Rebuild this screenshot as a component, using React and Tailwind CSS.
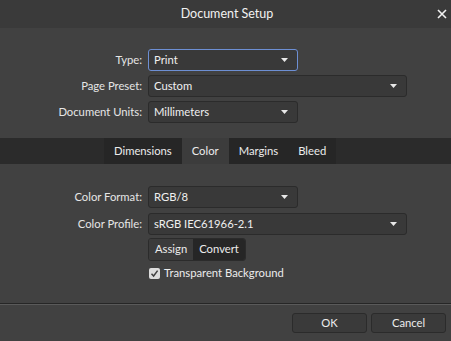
import React from "react";

function Select({ value, width, focused }) {
    return (
        <div
            className={`flex items-center justify-between h-[22px] ${width} rounded-[3px] border bg-[#393939] pl-[5px] pr-[9px] ${focused ? "border-[#6d8fd4]" : "border-[#2b2b2b]"}`}
        >
            <span className="text-[11.25px] text-[#f0f0f0] leading-none">{value}</span>
            <svg width="7" height="4" viewBox="0 0 7 4">
                <path d="M0 0H7L3.5 4Z" fill="#e8e8e8" />
            </svg>
        </div>
    );
}

function Row({ label, children }) {
    return (
        <div className="flex items-center">
            <div className="w-[148px] pr-[6px] text-right text-[11.25px] text-[#e6e6e6]">{label}</div>
            {children}
        </div>
    );
}

export default function App() {
    const tabs = ["Dimensions", "Color", "Margins", "Bleed"];
    return (
        <div
            className="w-[451px] h-[341px] bg-[#414141] flex flex-col select-none"
            style={{ fontFamily: 'Lato, "Open Sans", sans-serif' }}
        >
            {/* title bar */}
            <div className="relative h-[28px] bg-[#3a3a3a] flex items-center justify-center">
                <span className="text-[12.5px] text-[#f2f2f2] pl-[3px]">Document Setup</span>
                <svg className="absolute right-[4px] top-[9px]" width="10" height="10" viewBox="0 0 10 10">
                    <path d="M1 1L9 9M9 1L1 9" stroke="#f2f2f2" strokeWidth="1.6" />
                </svg>
            </div>

            <div className="flex flex-col gap-[4px] pt-[21px]">
                <Row label="Type:">
                    <Select value="Print" width="w-[150px]" focused />
                </Row>
                <Row label="Page Preset:">
                    <Select value="Custom" width="w-[259px]" />
                </Row>
                <Row label="Document Units:">
                    <Select value="Millimeters" width="w-[150px]" />
                </Row>
            </div>

            {/* tabs */}
            <div className="mt-[15px] h-[26px] bg-[#2b2b2b] flex pl-[104px]">
                <div className="flex bg-[#262626]">
                    {tabs.map((t) => (
                        <div
                            key={t}
                            className={`h-full flex items-center text-[11.25px] text-[#ececec] px-[10px] ${t === "Color" ? "bg-[#3c3c3c]" : ""}`}
                        >
                            {t}
                        </div>
                    ))}
                </div>
            </div>

            <div className="flex flex-col pt-[22px]">
                <Row label="Color Format:">
                    <Select value="RGB/8" width="w-[150px]" />
                </Row>
                <div className="mt-[5px]">
                    <Row label="Color Profile:">
                        <Select value="sRGB IEC61966-2.1" width="w-[259px]" />
                    </Row>
                </div>
                <div className="flex pl-[148px] mt-[3px]">
                    <div className="flex h-[23px] rounded-[3px] border border-[#2b2b2b] overflow-hidden text-[11.25px] text-[#ececec]">
                        <div className="flex items-center px-[6px] bg-[#3b3b3b]">Assign</div>
                        <div className="flex items-center px-[6px] bg-[#262626]">Convert</div>
                    </div>
                </div>
                <div className="flex items-center pl-[149px] mt-[4px] gap-[4px]">
                    <div className="w-[11px] h-[11px] rounded-[2px] bg-[#dcdcdc] flex items-center justify-center">
                        <svg width="9" height="9" viewBox="0 0 9 9">
                            <path d="M1.5 4.8L3.6 7L7.6 1.6" stroke="#404040" strokeWidth="1.5" fill="none" />
                        </svg>
                    </div>
                    <span className="text-[11.25px] text-[#ececec]">Transparent Background</span>
                </div>
            </div>

            <div className="mt-auto">
                <div className="h-px bg-[#262626]" />
                <div className="h-px bg-[#5a5a5a]" />
                <div className="flex justify-end gap-[4px] pr-[5px] pt-[8px] pb-[8px]">
                    <button className="w-[75px] h-[20px] rounded-[3px] border border-[#2b2b2b] bg-[#3a3a3a] text-[11.25px] text-[#ececec]">OK</button>
                    <button className="w-[75px] h-[20px] rounded-[3px] border border-[#2b2b2b] bg-[#3a3a3a] text-[11.25px] text-[#ececec]">Cancel</button>
                </div>
            </div>
        </div>
    );
}
